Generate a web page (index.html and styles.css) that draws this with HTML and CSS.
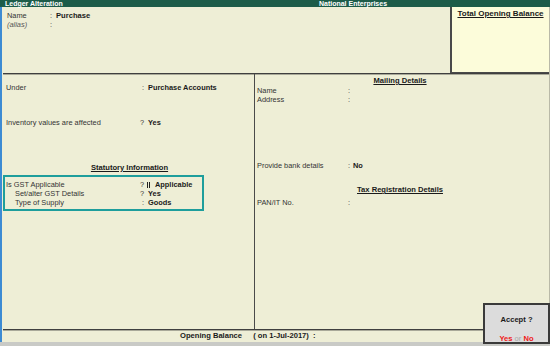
FILE: index.html
```html
<!DOCTYPE html>
<html lang="en">
  <head>
    <meta charset="utf-8">
    <meta name="viewport" content="width=device-width,initial-scale=1.0">
    <title>Ledger Alteration</title>
    <link rel="stylesheet" href="styles.css">
  </head>
  <body>
    <div class="screen">
      <div class="titlebar">
        <span class="title-left">Ledger Alteration</span>
        <span class="title-center">National Enterprises</span>
      </div>

      <div class="frame">
        <section class="head">
          <div class="ledger-name">
            <div class="row">
              <span class="label">Name</span>
              <span class="sep">:</span>
              <span class="value">Purchase</span>
            </div>
            <div class="row">
              <span class="label alias">(alias)</span>
              <span class="sep">:</span>
              <span class="value"></span>
            </div>
          </div>
          <aside class="opening-panel">
            <h2 class="heading">Total Opening Balance</h2>
          </aside>
        </section>

        <main class="details">
          <div class="col col-left">
            <div class="row row-under">
              <span class="label">Under</span>
              <span class="sep">:</span>
              <span class="value">Purchase Accounts</span>
            </div>
            <div class="row row-inventory">
              <span class="label">Inventory values are affected</span>
              <span class="sep">?</span>
              <span class="value">Yes</span>
            </div>

            <h3 class="heading heading-stat">Statutory Information</h3>
            <div class="gst-box">
              <div class="row">
                <span class="label">Is GST Applicable</span>
                <span class="sep">?</span>
                <span class="value"><i class="cursor"></i>Applicable</span>
              </div>
              <div class="row">
                <span class="label sub">Set/alter GST Details</span>
                <span class="sep">?</span>
                <span class="value">Yes</span>
              </div>
              <div class="row">
                <span class="label sub">Type of Supply</span>
                <span class="sep">:</span>
                <span class="value">Goods</span>
              </div>
            </div>
          </div>

          <div class="col col-right">
            <h3 class="heading heading-mail">Mailing Details</h3>
            <div class="row row-name">
              <span class="label">Name</span>
              <span class="sep">:</span>
              <span class="value"></span>
            </div>
            <div class="row">
              <span class="label">Address</span>
              <span class="sep">:</span>
              <span class="value"></span>
            </div>
            <div class="row row-bank">
              <span class="label">Provide bank details</span>
              <span class="sep">:</span>
              <span class="value">No</span>
            </div>
            <h3 class="heading heading-tax">Tax Registration Details</h3>
            <div class="row row-pan">
              <span class="label">PAN/IT No.</span>
              <span class="sep">:</span>
              <span class="value"></span>
            </div>
          </div>
        </main>

        <footer class="totals">
          <span class="ob-label">Opening Balance</span>
          <span class="ob-date">( on 1-Jul-2017)&nbsp; :</span>
        </footer>
      </div>

      <div class="statusbar"></div>

      <!-- confirmation prompt sits over the footer -->
      <div class="accept">
        <div class="accept-title">Accept ?</div>
        <div class="accept-choice"><b class="yes">Yes</b> <span class="or">or</span> <b class="no">No</b></div>
      </div>
    </div>
  </body>
</html>
```

FILE: styles.css
```css
body {
  margin: 0;
  padding: 0;
  background: #eeeed6;
}

.screen {
  position: relative;
  width: 550px;
  height: 346px;
  display: flex;
  flex-direction: column;
  font-family: "Liberation Sans", Arial, sans-serif;
  font-size: 7.4px;
  color: #333;
  background: #eeeed6;
  overflow: hidden;
}

/* Title bar */
.titlebar {
  height: 7px;
  line-height: 7px;
  display: grid;
  grid-template-columns: 255px 196px 1fr;
  background: #1d5c49;
  color: #fff;
  font-size: 7px;
  font-weight: bold;
}

.title-left {
  padding-left: 5px;
}

.title-center {
  text-align: center;
}

/* Main frame */
.frame {
  flex: 1;
  display: flex;
  flex-direction: column;
  border-left: 2px solid #3d8bd3;
  border-right: 1px solid #b9b9a8;
}

.row {
  display: grid;
  line-height: 9px;
  height: 9px;
  white-space: nowrap;
}

.value {
  font-weight: bold;
  color: #1a1a1a;
}

.heading {
  margin: 0;
  font-size: 7.6px;
  font-weight: bold;
  line-height: 9px;
  color: #1a1a1a;
  text-align: center;
  text-decoration: underline;
  text-underline-offset: 1px;
}

/* Ledger name block */
.head {
  height: 66px;
  display: flex;
}

.ledger-name {
  flex: 1;
  padding: 4px 0 0 5px;
}

.ledger-name .row {
  grid-template-columns: 43px 6px 1fr;
}

.ledger-name .value {
  font-size: 7.6px;
}

.alias {
  font-style: italic;
  color: #555;
}

.opening-panel {
  width: 97px;
  background: #fcfcda;
  border-left: 2px solid #4a4a4a;
  border-bottom: 1px solid #4a4a4a;
  padding-top: 2px;
}

.opening-panel .heading {
  font-size: 8px;
}

/* Details area */
.details {
  flex: 1;
  margin-left: 1px;
  display: grid;
  grid-template-columns: 252px 1fr;
  border-top: 1px solid #3f3f3f;
  box-shadow: inset 0 1px 0 #a9a999;
}

.col-left {
  border-right: 1px solid #4a4a4a;
  padding: 9px 0 0 3px;
}

.col-left .row {
  grid-template-columns: 131px 7px 1fr;
}

.col-left .sep {
  text-align: right;
}

.col-left .value {
  padding-left: 4px;
}

.row-inventory {
  margin-top: 26px;
}

.heading-stat {
  margin: 36px 0 0 -3px;
  padding-left: 2px;
}

.gst-box {
  width: 196px;
  margin: 3px 0 0 -3px;
  padding: 3px 0 2px 1px;
  border: 2px solid #1e9e9c;
}

.label.sub {
  padding-left: 9px;
}

.cursor {
  display: inline-block;
  width: 1px;
  height: 6px;
  margin: 0 5px 0 -1px;
  vertical-align: -1px;
  border-left: 1px solid #222;
  border-right: 1px solid #222;
}

.col-right {
  padding: 2px 6px 0 2px;
}

.col-right .row {
  grid-template-columns: 91px 5px 1fr;
}

.row-name {
  margin-top: 1px;
}

.row-bank {
  margin-top: 57px;
}

.heading-tax {
  margin-top: 15px;
}

.row-pan {
  margin-top: 4px;
}

/* Footer */
.totals {
  height: 12px;
  line-height: 12px;
  margin-left: 1px;
  padding-left: 177px;
  border-top: 1px solid #3f3f3f;
  box-shadow: inset 0 1px 0 #a9a999;
  font-weight: bold;
  font-size: 7.6px;
  color: #1a1a1a;
  white-space: nowrap;
}

.ob-date {
  margin-left: 9px;
}

.statusbar {
  height: 4px;
  background: #c9cac6;
}

/* Accept prompt */
.accept {
  position: absolute;
  right: 0;
  bottom: 2px;
  width: 63px;
  height: 37px;
  background: #dcdcdc;
  border: 2px solid #3a3a3a;
  text-align: center;
  color: #1a1a1a;
}

.accept-title {
  margin-top: 10px;
  line-height: 9px;
  font-weight: bold;
  font-size: 7.6px;
}

.accept-choice {
  margin-top: 11px;
  line-height: 8px;
  font-size: 7.6px;
}

.yes,
.no {
  color: #f01818;
}

.or {
  color: #a8a8a8;
}
```
